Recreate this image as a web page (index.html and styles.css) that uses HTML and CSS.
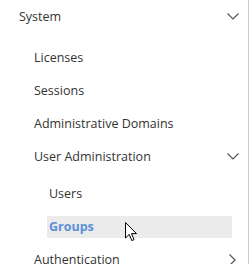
FILE: index.html
```html
<!DOCTYPE html>
<html lang="en">
<head>
    <meta charset="UTF-8">
    <title>System menu</title>
    <link rel="stylesheet" href="styles.css">
</head>
<body>
    <nav class="sidebar">
        <div class="group-title">
            <span>System</span>
            <svg class="chev" width="12" height="7" viewBox="0 0 12 7"><path d="M0.5 0.5 L6 6 L11.5 0.5" fill="none" stroke="#555" stroke-width="1.2"/></svg>
        </div>
        <ul class="menu">
            <li class="item">Licenses</li>
            <li class="item">Sessions</li>
            <li class="item">Administrative Domains</li>
            <li class="item parent">
                <span>User Administration</span>
                <svg class="chev" width="12" height="7" viewBox="0 0 12 7"><path d="M0.5 0.5 L6 6 L11.5 0.5" fill="none" stroke="#555" stroke-width="1.2"/></svg>
            </li>
            <li class="sub">Users</li>
            <li class="sub active">
                Groups
                <svg class="cursor" width="13" height="20" viewBox="0 0 13 20"><path d="M0.5 0.5 L0.5 16 L4.2 12.4 L6.8 18.6 L9 17.6 L6.5 11.6 L11.5 11.6 Z" fill="#fff" stroke="#000" stroke-width="1"/></svg>
            </li>
            <li class="item parent">
                <span>Authentication</span>
                <svg class="chev right" width="7" height="12" viewBox="0 0 7 12"><path d="M0.5 0.5 L6 6 L0.5 11.5" fill="none" stroke="#555" stroke-width="1.2"/></svg>
            </li>
        </ul>
    </nav>
</body>
</html>
```

FILE: styles.css
```css
body {
    margin: 0;
    background: #fff;
    font-family: "Open Sans", "Noto Sans", sans-serif;
    font-size: 12.5px;
    color: #333;
}
.sidebar {
    width: 248px;
    height: 264px;
    border-right: 1px solid #ccc;
    overflow: hidden;
}
.group-title {
    display: flex;
    align-items: center;
    justify-content: space-between;
    height: 33px;
    padding: 0 9px 0 19px;
}
.menu {
    list-style: none;
    margin: 0;
    padding: 8px 0 0 0;
}
.item {
    display: flex;
    align-items: center;
    justify-content: space-between;
    height: 33px;
    padding: 0 9px 0 34px;
}
.sub {
    position: relative;
    height: 22px;
    line-height: 22px;
    margin: 0 16px 11px 47px;
    padding-left: 2px;
}
.parent + .sub {
    margin-top: 10px;
}
.active {
    margin-bottom: 5px;
    background: #ebebeb;
    color: #5b8fd8;
    font-weight: bold;
}
.right {
    margin-right: 3px;
}
.cursor {
    position: absolute;
    left: 78px;
    top: 6px;
}
```
